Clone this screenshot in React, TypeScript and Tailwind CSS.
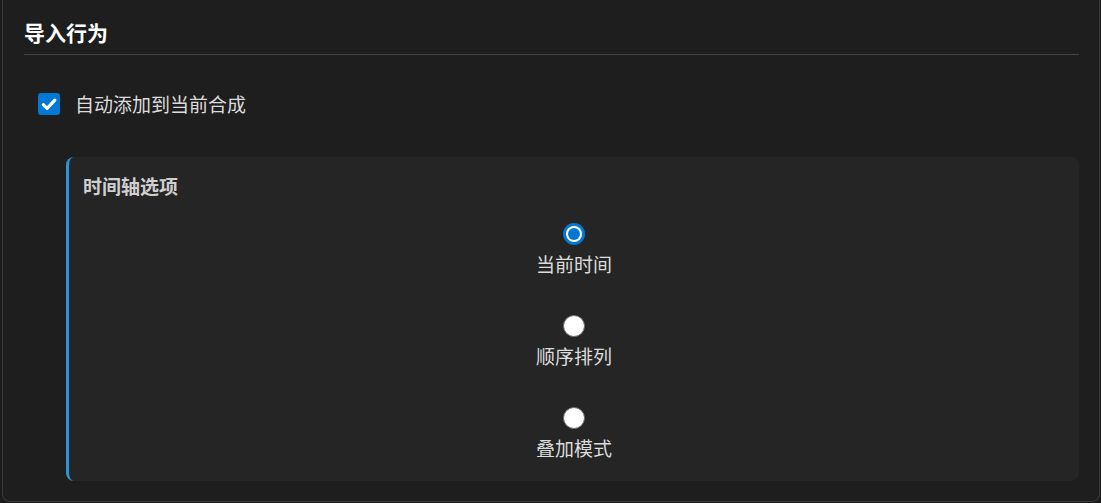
import { useState } from 'react'

const modes = ['当前时间', '顺序排列', '叠加模式']

const font = { fontFamily: '"Noto Sans CJK SC", "Noto Sans", sans-serif' }

function Radio({ checked }: { checked: boolean }) {
  if (checked) {
    return (
      <span className="flex h-[22px] w-[22px] rounded-full bg-[#0078d4] p-[3px]">
        <span className="flex h-full w-full rounded-full bg-white p-[2px]">
          <span className="h-full w-full rounded-full bg-[#0078d4]" />
        </span>
      </span>
    )
  }
  return <span className="block h-[22px] w-[22px] rounded-full border-[1.5px] border-[#6f6f6f] bg-white" />
}

export default function App() {
  const [auto, setAuto] = useState(true)
  const [mode, setMode] = useState(0)

  return (
    <div className="h-[503px] w-full bg-[#1b1b1b] pl-[2px] pr-[1px]" style={font}>
      <div className="h-[502px] rounded-b-lg border-x border-b border-[#3a3a3a] bg-[#1e1e1e] pl-[21px] pr-[20px] pt-[18px]">
        <h2 className="border-b border-[#444] pb-2 text-[21px] font-bold leading-7 text-white">导入行为</h2>

        <label className="ml-[14px] mt-[36px] flex cursor-pointer items-center gap-[15px]" onClick={() => setAuto(!auto)}>
          <span className="flex h-[22px] w-[22px] items-center justify-center rounded-[3px] bg-[#0078d4]">
            {auto && (
              <svg viewBox="0 0 16 16" className="h-[18px] w-[18px]" fill="none">
                <path d="M3 8.6l3.3 3.3L13.2 4.6" stroke="white" strokeWidth="2.8" strokeLinecap="round" strokeLinejoin="round" />
              </svg>
            )}
          </span>
          <span className="text-[19px] leading-[26px] text-[#dcdcdc]">自动添加到当前合成</span>
        </label>

        <div className="ml-[42px] mt-[40px] rounded-lg border-l-[3px] border-[#2b95dc] bg-[#252525] pb-5 pl-[14px] pt-4">
          <h3 className="text-[19px] font-bold leading-[26px] text-[#cfcfcf]">时间轴选项</h3>
          <div className="mt-6 flex flex-col items-center gap-[38px] pr-[14px]">
            {modes.map((m, i) => (
              <button key={m} className="flex flex-col items-center gap-[6px]" onClick={() => setMode(i)}>
                <Radio checked={mode === i} />
                <span className="text-[19px] leading-[26px] text-[#dcdcdc]">{m}</span>
              </button>
            ))}
          </div>
        </div>
      </div>
    </div>
  )
}
